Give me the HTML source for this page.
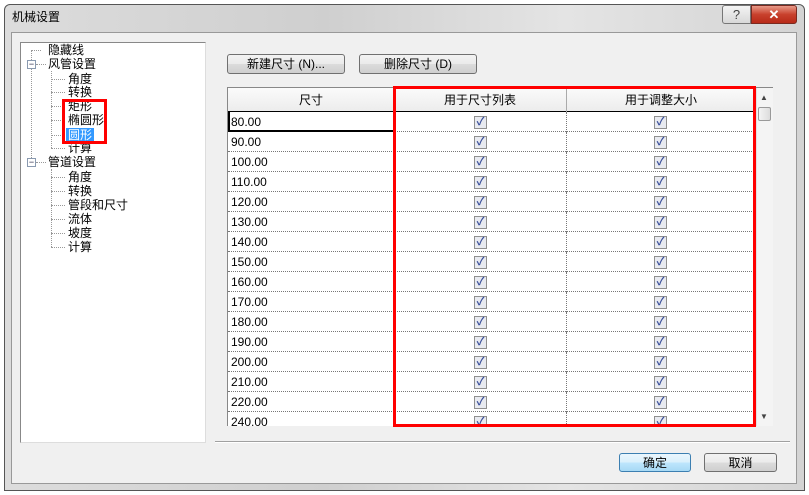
<!DOCTYPE html>
<html><head><meta charset="utf-8"><style>
*{margin:0;padding:0;box-sizing:border-box}
body{width:809px;height:495px;background:#fff;font-family:"Liberation Sans","Noto Sans CJK SC","WenQuanYi Zen Hei",sans-serif;font-size:12px;color:#000;position:relative;overflow:hidden}
.abs{position:absolute}
.win{left:4px;top:4px;width:801px;height:487px;border:1px solid #555;border-radius:6px 6px 0 0;background:linear-gradient(90deg,#dcdcdc,#cfcfcf 40%,#e4e4e4 70%,#d4d4d4)}
.body{left:11px;top:32px;width:786px;height:452px;background:#f0f0f0;border:1px solid #999}
.tree{left:20px;top:42px;width:186px;height:401px;background:#fff;border:1px solid #888;border-right-color:#ddd;border-bottom-color:#ddd}
.t{position:absolute;font-size:12px;line-height:14px;white-space:nowrap}
.btn{border:1px solid #707070;border-radius:3px;background:linear-gradient(#f2f2f2,#ebebeb 50%,#dcdcdc 51%,#cfcfcf);text-align:center;font-size:12px;line-height:18px}
.grid{left:227px;top:87px;width:546px;height:339px;background:#fff;border-left:1px solid #888;border-top:1px solid #888;overflow:hidden}
.row{position:absolute;left:0;width:528px;height:20px;border-bottom:1px dotted #777}
.cb{position:absolute;width:13px;height:13px;border:1px solid #8f8f8f;background:#e8eaf0;top:4px;color:#3a4f9a;font-size:11px;line-height:11px;text-align:center;font-weight:bold}
.dl{position:absolute;border-left:1px dotted #999}
.dh{position:absolute;border-top:1px dotted #999;width:10px}
</style></head><body>
<div class="abs win"></div>
<div class="abs t" style="left:12px;top:10px;font-size:12px">机械设置</div>
<div class="abs" style="left:722px;top:5px;width:29px;height:19px;border:1px solid #777;border-radius:3px 0 0 3px;background:linear-gradient(#f4f4f4,#d8d8d8);text-align:center;font-size:13px;line-height:17px;color:#444">?</div>
<div class="abs" style="left:751px;top:5px;width:46px;height:19px;border:1px solid #7a2a20;border-radius:0 3px 3px 0;background:linear-gradient(#e89a88,#c8402c 50%,#b82a18);text-align:center;font-size:13px;line-height:17px;color:#fff;font-weight:bold">✕</div>
<div class="abs body"></div>
<div class="abs tree"></div>
<!-- tree lines -->
<div class="dl" style="left:31px;top:50px;height:112px"></div>
<div class="dh" style="left:31px;top:50px"></div>
<div class="dh" style="left:36px;top:64px"></div>
<div class="dh" style="left:36px;top:162px"></div>
<div class="dl" style="left:51px;top:71px;height:77px"></div>
<div class="dl" style="left:51px;top:169px;height:78px"></div>
<div class="abs" style="left:27px;top:60px;width:9px;height:9px;border:1px solid #8a9ab0;background:#fff;font-size:9px;line-height:6px;text-align:center;color:#224">−</div>
<div class="abs" style="left:27px;top:158px;width:9px;height:9px;border:1px solid #8a9ab0;background:#fff;font-size:9px;line-height:6px;text-align:center;color:#224">−</div>
<div class="dh" style="left:51px;top:79px;width:14px"></div><div class="dh" style="left:51px;top:92px;width:14px"></div><div class="dh" style="left:51px;top:106px;width:14px"></div><div class="dh" style="left:51px;top:120px;width:14px"></div><div class="dh" style="left:51px;top:135px;width:14px"></div><div class="dh" style="left:51px;top:148px;width:14px"></div>
<div class="dh" style="left:51px;top:177px;width:14px"></div><div class="dh" style="left:51px;top:191px;width:14px"></div><div class="dh" style="left:51px;top:205px;width:14px"></div><div class="dh" style="left:51px;top:219px;width:14px"></div><div class="dh" style="left:51px;top:233px;width:14px"></div><div class="dh" style="left:51px;top:247px;width:14px"></div>
<div class="t" style="left:48px;top:43px">隐藏线</div>
<div class="t" style="left:48px;top:57px">风管设置</div>
<div class="t" style="left:68px;top:72px">角度</div>
<div class="t" style="left:68px;top:85px">转换</div>
<div class="t" style="left:68px;top:99px">矩形</div>
<div class="t" style="left:68px;top:113px">椭圆形</div>
<div class="t" style="left:66px;top:128px;background:#3399ff;color:#fff;padding:0 2px">圆形</div>
<div class="t" style="left:68px;top:141px">计算</div>
<div class="t" style="left:48px;top:155px">管道设置</div>
<div class="t" style="left:68px;top:170px">角度</div>
<div class="t" style="left:68px;top:184px">转换</div>
<div class="t" style="left:68px;top:198px">管段和尺寸</div>
<div class="t" style="left:68px;top:212px">流体</div>
<div class="t" style="left:68px;top:226px">坡度</div>
<div class="t" style="left:68px;top:240px">计算</div>
<div class="abs" style="left:62px;top:99px;width:45px;height:45px;border:3px solid #f00"></div>
<div class="abs btn" style="left:227px;top:54px;width:118px;height:20px">新建尺寸 (N)...</div>
<div class="abs btn" style="left:359px;top:54px;width:118px;height:20px">删除尺寸 (D)</div>
<div class="abs grid">
<div class="abs" style="left:0;top:0;width:528px;height:24px;background:linear-gradient(#fbfbfb,#ececec);border-bottom:1px solid #000"></div>
<div class="abs" style="left:166px;top:0;height:24px;border-left:1px solid #aaa"></div>
<div class="abs" style="left:338px;top:0;height:24px;border-left:1px solid #aaa"></div>
<div class="t" style="left:0;width:166px;text-align:center;top:5px">尺寸</div>
<div class="t" style="left:166px;width:172px;text-align:center;top:5px">用于尺寸列表</div>
<div class="t" style="left:338px;width:190px;text-align:center;top:5px">用于调整大小</div>
<div id="rows"></div>
<div class="abs" style="left:528px;top:0;width:17px;height:338px;background:#f4f4f4;border-left:1px solid #e0e0e0"></div>
<div class="abs" style="left:530px;top:19px;width:13px;height:14px;border:1px solid #999;border-radius:2px;background:linear-gradient(90deg,#f4f4f4,#dcdcdc)"></div>
<div class="t" style="left:532px;top:3px;font-size:8px;color:#444">▲</div>
<div class="t" style="left:532px;top:322px;font-size:8px;color:#444">▼</div>
</div>
<div class="abs" style="left:393px;top:86px;width:363px;height:341px;border:3px solid #f00"></div>
<div class="abs" style="left:215px;top:441px;width:575px;border-top:1px solid #a0a0a0;border-bottom:1px solid #fff"></div>
<div class="abs btn" style="left:619px;top:453px;width:72px;height:19px;border-color:#3c7fb1;background:linear-gradient(#eaf6fd,#d9f0fc 50%,#bee6fd 51%,#a7d9f5)">确定</div>
<div class="abs btn" style="left:704px;top:453px;width:73px;height:19px">取消</div>
<script>
var v=[80,90,100,110,120,130,140,150,160,170,180,190,200,210,220,240],h='';
v.forEach(function(x,i){var t=24+i*20;
h+='<div class="row" style="top:'+t+'px"><div class="abs" style="left:166px;top:0;height:20px;border-left:1px dotted #777"></div><div class="abs" style="left:338px;top:0;height:20px;border-left:1px dotted #777"></div>'+(i==0?'<div class="abs" style="left:0;top:0;width:167px;height:20px;border:2px solid #000;border-top:0"></div>':'')+'<div class="t" style="left:3px;top:3px">'+x+'.00</div><div class="cb" style="left:246px">✓</div><div class="cb" style="left:426px">✓</div></div>';});
document.getElementById('rows').innerHTML=h;
</script>
</body></html>
